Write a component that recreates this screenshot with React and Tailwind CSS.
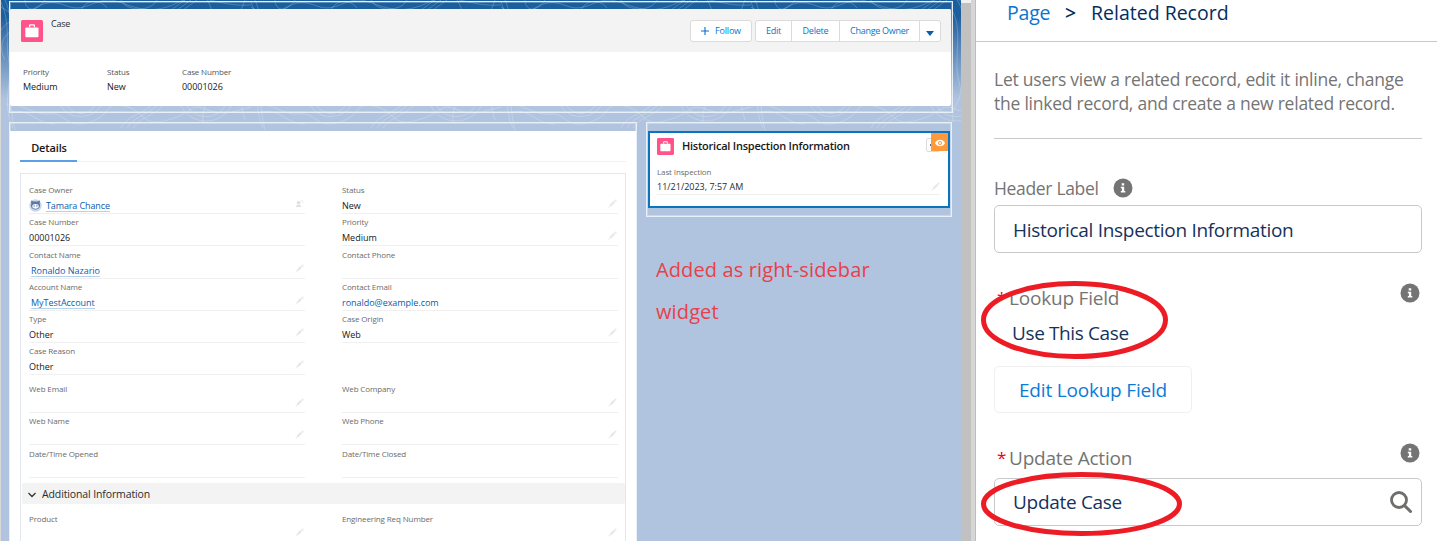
import React from "react";

const labelCls = "text-[8px] leading-[12px] tracking-[-0.12px] text-[#6b6b69] whitespace-nowrap";

function Contours() {
  return (
    <svg className="absolute inset-0" width="960" height="130" fill="none">
      <defs>
        <pattern id="topo" width="250" height="130" patternUnits="userSpaceOnUse">
          <g stroke="#ffffff" strokeOpacity="0.26" strokeWidth="0.8">
            <path d="M-10 8c12-8 20 14 34 6s22-16 42-8 30-12 52-4 36 12 60 0 40 8 80 2" />
            <path d="M0 2c10 22 4 40 8 60s-8 40 4 66M4 0c10 22 4 44 6 60s-4 40 4 70M12 30c-12 6-14 20-8 30M12 20c-20 10-18 28-12 46" />
            <path d="M5 104c20 0 28 12 44 10s16 16 40 8 12-20 34-16 16 22 44 14 20-18 40-10 30-2 50-4" />
            <path d="M10 112c20-4 24 12 44 12M60 106c8 14 30 14 40 0M66 106c8 10 20 10 28 0M120 128c6-12 20-14 30-22M126 128c6-10 20-14 30-22M132 128c6-10 20-12 30-22M180 106c10 20 40 20 50 0M186 106c8 14 30 14 38 0" />
            <path d="M24 0c0 10 10 14 20 0M120 0c6 12 30 12 36 0M170 10l14-10M176 10l14-10M182 10l14-10M80 10c6-12 20-10 26-2" />
            <path d="M202 12c10 20 0 50 6 70s-8 20-6 40M206 0c14 20 0 50 6 80M244 0c-8 20-12 30-4 60s-6 30 4 60M238 20c-8 20-8 40-2 60" />
          </g>
        </pattern>
      </defs>
      <rect width="960" height="130" fill="url(#topo)" />
    </svg>
  );
}

function CaseIcon({ className }) {
  return (
    <svg viewBox="0 0 22 22" className={className}>
      <rect width="22" height="22" rx="1.5" fill="#ff538a" />
      <path d="M8.6 7V5.6c0-.5.3-.8.8-.8h3.2c.5 0 .8.3.8.8V7" fill="none" stroke="#fff" strokeWidth="1.3" />
      <rect x="4.3" y="7.6" width="13.2" height="9.6" rx="1" fill="#fff" />
    </svg>
  );
}

function Pencil() {
  return (
    <svg viewBox="0 0 10 10" className="size-[9px]" fill="#e8e8e8">
      <path d="M.5 9.5l.7-2.4 1.7 1.7zM1.7 6.5l4.6-4.6 1.8 1.8-4.6 4.6zM6.9 1.4l.7-.7c.3-.3.7-.3 1 0l.8.8c.3.3.3.7 0 1l-.7.7z" />
    </svg>
  );
}

function OwnerIcon() {
  return (
    <svg viewBox="0 0 10 10" className="size-[9px]" fill="#e2e2e2">
      <circle cx="4" cy="4" r="2.1" />
      <path d="M.8 9c0-2 1.4-2.6 3.2-2.6S7.2 7 7.2 9z" />
      <path d="M6.5 1.5c1.5 0 2.2.7 2.2 2.5" fill="none" stroke="#e2e2e2" />
    </svg>
  );
}

function Avatar() {
  return (
    <svg viewBox="0 0 14 14" className="-mt-px size-[13px] shrink-0">
      <circle cx="7" cy="7" r="6.7" fill="#c9d6e9" />
      <path d="M2.2 1.6L5 2.7h4l2.8-1.1-.3 3.4c.7 1.7.6 3.9-1.3 5.2-1.9 1.3-4.5 1.3-6.400 0C1.900 8.900 1.800 6.700 2.500 5z" fill="#5b77a5" />
      <ellipse cx="7" cy="7.9" rx="3.5" ry="2.6" fill="#f4f7fb" />
      <circle cx="5.5" cy="7.5" r=".7" fill="#53709f" />
      <circle cx="8.5" cy="7.5" r=".7" fill="#53709f" />
    </svg>
  );
}

function Info() {
  return (
    <svg viewBox="0 0 20 20" className="size-[20px] shrink-0">
      <circle cx="10" cy="10" r="9.5" fill="#747474" />
      <path d="M8.7 5.3h2.5v2.2H8.7zM7.8 8.7h3.4v4.4h1.1v1.5H7.8v-1.500h1.100v-2.900H7.800z" fill="#fff" />
    </svg>
  );
}

function Field({ label, value, kind, icon = "pencil", tall }) {
  return (
    <div
      className={
        "flex w-[276px] flex-col border-b border-[#f0f0f0] " + (tall ? "h-[33px] pt-[3px]" : "h-[32px] pt-[2px]")
      }
    >
      <span className={labelCls}>{label}</span>
      <div className="flex h-[16px] items-center justify-between pt-[4px]">
        {kind === "link" ? (
          <span className="ml-[2px] border-b border-[#b4d2ec] text-[9px] leading-[11px] tracking-[-0.03px] text-[#0b5cab]">{value}</span>
        ) : kind === "owner" ? (
          <span className="flex items-center gap-[4px]">
            <Avatar />
            <span className="border-b border-[#b4d2ec] text-[9px] leading-[11px] tracking-[-0.12px] text-[#0b5cab]">{value}</span>
          </span>
        ) : kind === "mail" ? (
          <span className="text-[9px] leading-[12px] tracking-[-0.03px] text-[#0b5cab]">{value}</span>
        ) : (
          <span className="text-[9px] leading-[12px] text-[#181818]">{value}</span>
        )}
        <span className="-mt-[5px] mr-px">
          {icon === "pencil" && <Pencil />}
          {icon === "owner" && <OwnerIcon />}
        </span>
      </div>
    </div>
  );
}

function Row({ children }) {
  return <div className="flex gap-[37px] pl-[8px]">{children}</div>;
}

function Summary({ label, value, className }) {
  return (
    <div className={"flex flex-col " + className}>
      <span className="whitespace-nowrap text-[8px] leading-[12px] tracking-[-0.15px] text-[#55554f]">{label}</span>
      <span className="mt-[3px] text-[9px] leading-[12px] tracking-[-0.05px] text-[#181818]">{value}</span>
    </div>
  );
}

function LeftCanvas() {
  return (
    <div className="relative h-[541px] w-[961px] overflow-hidden border-l border-[#d9d9d9] bg-[#b0c4df]">
      <div className="absolute inset-x-0 top-0 h-[110px] bg-linear-to-b from-[#1b5f9e] from-15% to-[#b0c4df] to-90%" />
      <Contours />
      <div className="relative flex flex-col gap-[9px] pl-[8px] pt-px">
        <section className="h-[112px] w-[944px] border border-[#e9eff7] pt-[7px] shadow-[inset_0_0_0_1px_rgba(255,255,255,0.3)]">
          <div className="h-[97px] w-[941px] rounded-[2px] bg-white">
            <div className="flex h-[43px] justify-between rounded-t-[2px] bg-[#f3f3f3] pl-[11px] pr-[10px] pt-[11px]">
              <div className="flex gap-[8px]">
                <CaseIcon className="size-[22px]" />
                <span className="-mt-[2px] text-[9px] leading-[12px] tracking-[-0.2px] text-[#2b2b2b]">Case</span>
              </div>
              <div className="flex h-[22px] gap-[3px] text-[9px] tracking-[-0.2px] text-[#0176d3]">
                <button className="flex w-[62px] items-center justify-center gap-[6px] rounded-[3px] border border-[#dddbda] bg-white">
                  <svg viewBox="0 0 8 8" className="size-[8px]" stroke="#0b6fc6" strokeWidth="1.1"><path d="M4 0v8M0 4h8" /></svg>
                  Follow
                </button>
                <div className="flex overflow-hidden rounded-[3px] border border-[#dddbda] bg-white">
                  <button className="w-[36px] border-r border-[#dddbda]">Edit</button>
                  <button className="w-[48px] border-r border-[#dddbda]">Delete</button>
                  <button className="w-[80px] border-r border-[#dddbda] tracking-[-0.27px]">Change Owner</button>
                  <button className="flex w-[20px] items-center justify-center pt-[4px]">
                    <svg viewBox="0 0 8 5" className="h-[5px] w-[8px]"><path d="M0 0h8L4 5z" fill="#0b5cab" /></svg>
                  </button>
                </div>
              </div>
            </div>
            <div className="flex pl-[13px] pt-[14px]">
              <Summary label="Priority" value="Medium" className="w-[84px]" />
              <Summary label="Status" value="New" className="w-[75px]" />
              <Summary label="Case Number" value="00001026" className="w-[80px]" />
            </div>
          </div>
        </section>

        <div className="flex gap-[9px]">
          <section className="h-[430px] w-[628px] border border-[#e9eff7] pt-[8px] shadow-[inset_0_0_0_1px_rgba(255,255,255,0.3)]">
            <div className="h-[430px] bg-white pl-[10px]">
              <div className="flex h-[31px] w-[606px] border-b border-[#f1f1f1]">
                <div className="h-[31px] w-[57px] border-b-2 border-[#5a9fea] pl-px pt-[8px] text-center text-[11px] font-semibold leading-[18px] tracking-[-0.15px] text-[#181818]">
                  Details
                </div>
              </div>
              <div className="mt-[11px] h-[400px] w-[606px] border border-[#e3e7ef] pt-[7px]">
                <Row>
                  <Field tall label="Case Owner" value="Tamara Chance" kind="owner" icon="owner" />
                  <Field tall label="Status" value="New" />
                </Row>
                <Row>
                  <Field label="Case Number" value="00001026" icon="none" />
                  <Field label="Priority" value="Medium" />
                </Row>
                <Row>
                  <Field tall label="Contact Name" value="Ronaldo Nazario" kind="link" />
                  <Field tall label="Contact Phone" icon="none" />
                </Row>
                <Row>
                  <Field label="Account Name" value="MyTestAccount" kind="link" />
                  <Field label="Contact Email" value="ronaldo@example.com" kind="mail" icon="none" />
                </Row>
                <Row>
                  <Field label="Type" value="Other" />
                  <Field label="Case Origin" value="Web" />
                </Row>
                <Row>
                  <Field label="Case Reason" value="Other" />
                </Row>
                <div className="h-[5px]" />
                <Row>
                  <Field tall label="Web Email" />
                  <Field tall label="Web Company" />
                </Row>
                <Row>
                  <Field label="Web Name" />
                  <Field label="Web Phone" />
                </Row>
                <Row>
                  <Field tall label="Date/Time Opened" icon="none" />
                  <Field tall label="Date/Time Closed" icon="none" />
                </Row>
                <div className="mb-[6px] ml-px mt-[5px] flex h-[21px] items-center gap-[6px] rounded-[2px] bg-[#f3f3f3] pl-[6px] pt-[2px]">
                  <svg viewBox="0 0 8 6" className="h-[6px] w-[8px]" fill="none" stroke="#333" strokeWidth="1.3"><path d="M.5 1L4 4.5 7.5 1" /></svg>
                  <span className="text-[10.5px] tracking-[-0.12px] text-[#2b2b2b]">Additional Information</span>
                </div>
                <Row>
                  <Field tall label="Product" />
                  <Field tall label="Engineering Req Number" />
                </Row>
              </div>
            </div>
          </section>

          <div className="flex flex-col">
            <section className="h-[95px] w-[306px] border border-[#e9eff7] px-px pt-[8px] shadow-[inset_0_0_0_1px_rgba(255,255,255,0.3)]">
              <div className="relative h-[77px] w-[302px] border-2 border-[#0b74bd] bg-white pl-[7px] pt-[5px]">
                <div className="flex items-center gap-[8px]">
                  <CaseIcon className="size-[17px]" />
                  <span className="-mt-[2px] text-[11px] font-semibold leading-[17px] tracking-[-0.23px] text-[#181818]">Historical Inspection Information</span>
                </div>
                <div className="mt-[11px] flex h-[29px] w-[283px] flex-col border-b border-[#f0f0f0]">
                  <span className={labelCls}>Last Inspection</span>
                  <div className="flex items-center justify-between pt-[2px] text-[9px] leading-[14px] text-[#2b2b2b]">
                    11/21/2023, 7:57 AM
                    <span className="-mt-[2px]"><Pencil /></span>
                  </div>
                </div>
                <div className="absolute right-[8px] top-[5px] flex h-[14px] w-[14px] items-center rounded-[2px] border border-[#dddbda] pl-[3px]">
                  <span className="size-[2px] bg-[#6b6b69]" />
                </div>
                <div className="absolute right-0 top-0 flex h-[18px] w-[17px] items-center justify-center bg-[#ff9a3c] pt-[2px]">
                  <svg viewBox="0 0 10 8" className="h-[8px] w-[10px]">
                    <path d="M0 4C1.2 1.8 2.8.7 5 .7S8.8 1.8 10 4C8.8 6.2 7.2 7.3 5 7.3S1.2 6.2 0 4z" fill="#fff" />
                    <circle cx="5" cy="4" r="2" fill="#ff9a3c" />
                    <circle cx="5" cy="4" r="1" fill="#fff" />
                  </svg>
                </div>
              </div>
            </section>
            <p className="ml-[10px] mt-[32px] w-[260px] text-[20px] leading-[42px] tracking-[0.12px] text-[#e8404a]">
              Added as right-sidebar
              <br />
              widget
            </p>
          </div>
        </div>
      </div>
    </div>
  );
}

function RightPanel() {
  return (
    <div className="relative h-[541px] w-[461px] bg-white">
      <div className="flex h-[42px] items-start border-b border-[#c9c9c9] pl-[31px] text-[19.5px] leading-[26px]">
        <span className="w-[58px] tracking-[-0.2px] text-[#0b74d1]">Page</span>
        <span className="w-[26px] font-semibold text-[#032d60]">&gt;</span>
        <span className="text-[#032d60]">Related Record</span>
      </div>
      <div className="flex flex-col pl-[18px] pr-[15px]">
        <p className="mt-[25px] whitespace-nowrap text-[17.5px] leading-[24px] tracking-[-0.24px] text-[#747474]">
          Let users view a related record, edit it inline, change
          <br />
          the linked record, and create a new related record.
        </p>
        <div className="mt-[23px] h-px bg-[#c9c9c9]" />
        <div className="mt-[36px] flex h-[26px] items-center gap-[14px] text-[17.5px] tracking-[-0.33px] text-[#747474]">
          Header Label
          <Info />
        </div>
        <div className="mt-[4px] flex h-[48px] items-center rounded-[5px] border border-[#c9c9c9] pl-[18px] pt-[2px] text-[19px] tracking-[-0.3px] text-[#16325c]">
          Historical Inspection Information
        </div>
        <div className="mt-[30px] flex h-[30px] items-start justify-between pr-[2px]">
          <div className="flex pl-[3px] pt-[2px] text-[19px] leading-[26px] tracking-[-0.2px] text-[#747474]">
            <span className="w-[12px] text-[17px] text-[#ea001e]">*</span>Lookup Field
          </div>
          <Info />
        </div>
        <div className="mt-[8px] pl-[18px] text-[19px] leading-[24px] tracking-[-0.38px] text-[#16325c]">Use This Case</div>
        <button className="mt-[21px] flex h-[47px] w-[198px] items-center justify-center rounded-[5px] border border-[#f0f0f0] pt-px text-[19px] tracking-[-0.2px] text-[#0b7bd8]">
          Edit Lookup Field
        </button>
        <div className="mt-[30px] flex h-[30px] items-start justify-between pr-[2px]">
          <div className="flex pl-[3px] pt-[2px] text-[19px] leading-[26px] tracking-[-0.2px] text-[#747474]">
            <span className="w-[12px] text-[17px] text-[#ea001e]">*</span>Update Action
          </div>
          <Info />
        </div>
        <div className="mt-[5px] flex h-[48px] items-center justify-between rounded-[5px] border border-[#c9c9c9] pl-[18px] pr-[9px] text-[19px] tracking-[-0.3px] text-[#16325c]">
          Update Case
          <svg viewBox="0 0 22 22" className="size-[22px]" fill="none" stroke="#706e6b">
            <circle cx="9" cy="9" r="7.5" strokeWidth="2.8" />
            <path d="M14.5 14.5l6 6" strokeWidth="3" strokeLinecap="round" />
          </svg>
        </div>
      </div>
      <svg className="absolute left-0 top-[270px]" width="230" height="271" fill="none" stroke="#ed1c24" strokeWidth="5">
        <ellipse cx="98.5" cy="50" rx="91" ry="36.5" />
        <ellipse cx="105.5" cy="234" rx="98" ry="29.5" />
      </svg>
    </div>
  );
}

export default function App() {
  return (
    <div className="flex h-[541px] w-[1437px] overflow-hidden bg-white font-['Open_Sans',sans-serif]">
      <LeftCanvas />
      <div className="flex h-[541px] w-[15px]">
        <div className="w-[10px] border-t-[3px] border-[#f1f1f1] bg-[#c1c1c1]" />
        <div className="w-[5px] border-r border-[#bdbdbd] bg-[#d6d6d6]" />
      </div>
      <RightPanel />
    </div>
  );
}
